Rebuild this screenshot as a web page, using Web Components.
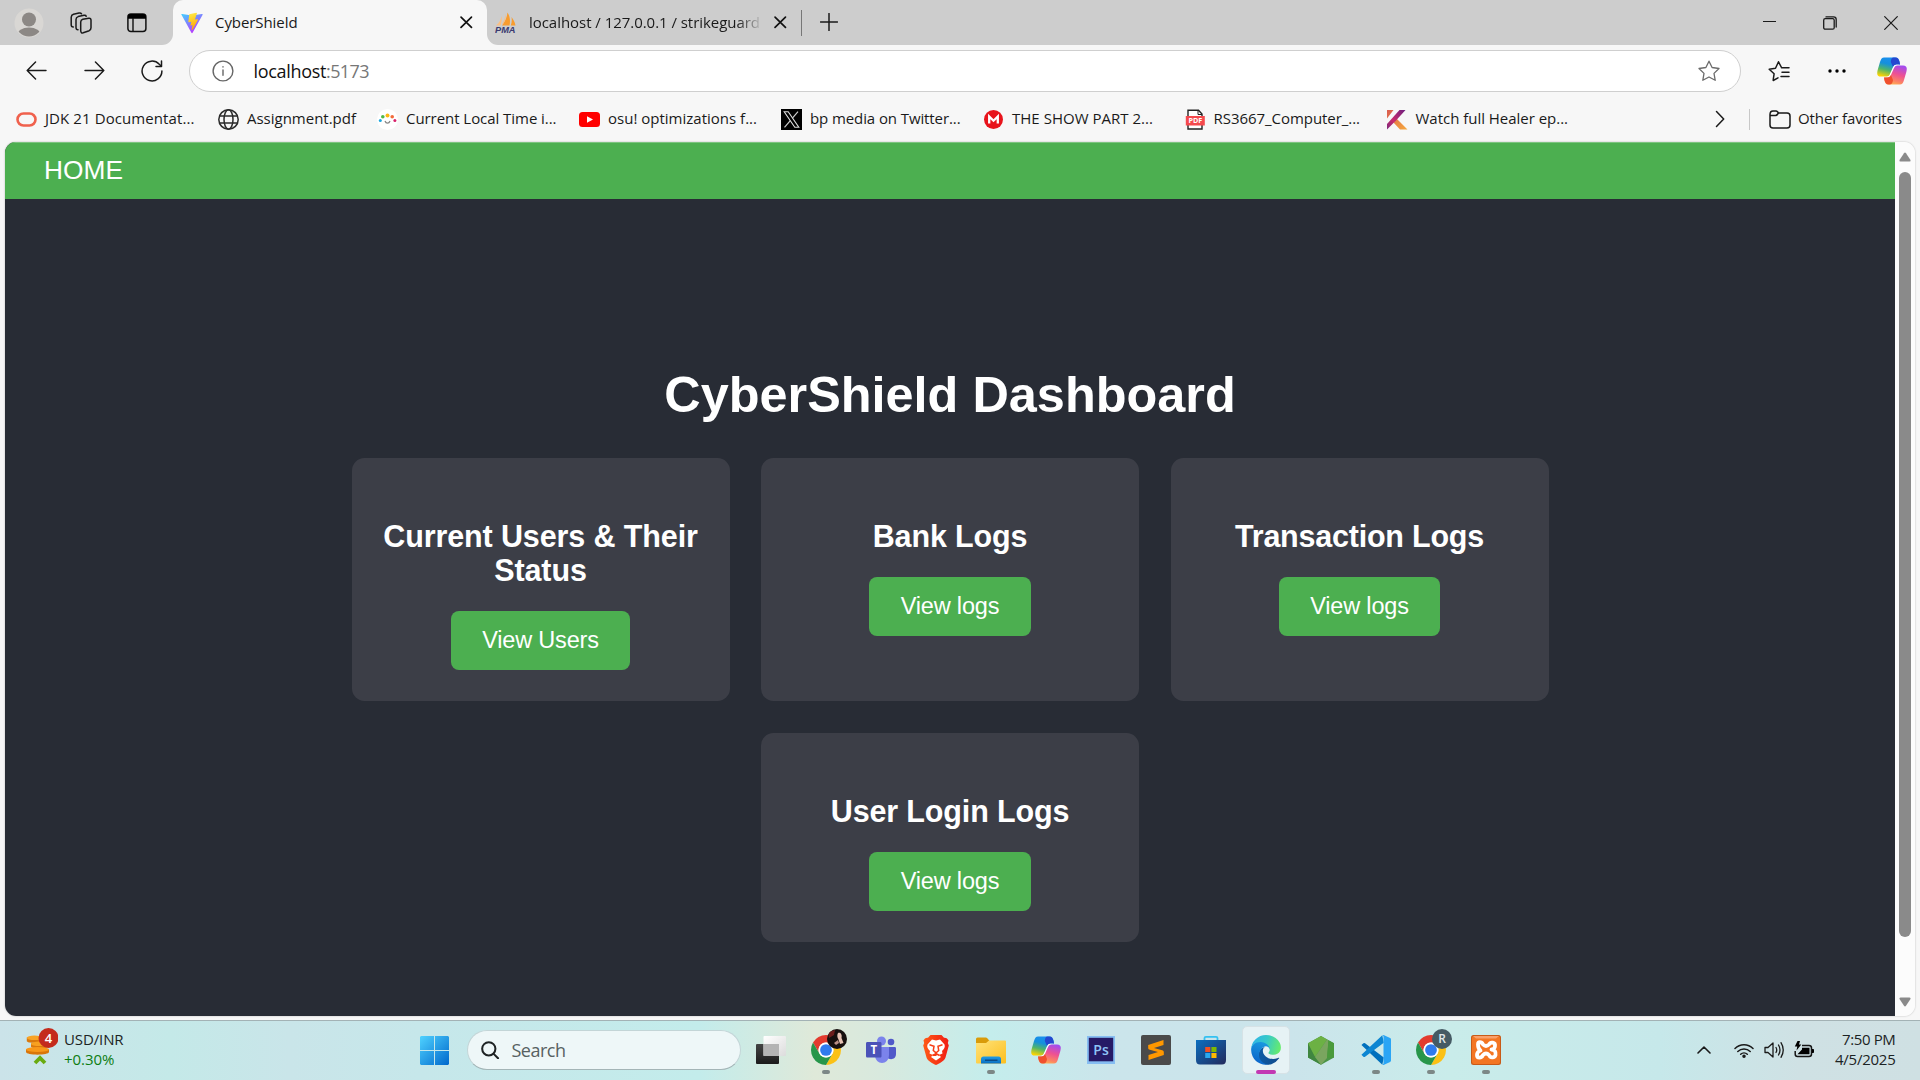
<!DOCTYPE html>
<html lang="en">
<head>
<meta charset="utf-8">
<title>CyberShield</title>
<style>
html,body{margin:0;padding:0;width:1920px;height:1080px;overflow:hidden;background:#f7f7f7;font-family:"Open Sans","Noto Sans",sans-serif}
</style>
</head>
<body>
<desktop-screen></desktop-screen>
<script>
const copilot = `<svg viewBox="0 0 30 28"><defs>
<linearGradient id="a" x1=".6" y1="0" x2=".3" y2="1"><stop offset="0" stop-color="#1a8ff0"/><stop offset=".35" stop-color="#1590dc"/><stop offset=".65" stop-color="#4fb56a"/><stop offset="1" stop-color="#fdd400"/></linearGradient>
<linearGradient id="b" x1=".7" y1="0" x2=".35" y2="1"><stop offset="0" stop-color="#a24bf0"/><stop offset=".45" stop-color="#ee5192"/><stop offset=".8" stop-color="#fc8463"/><stop offset="1" stop-color="#ffb152"/></linearGradient></defs>
<path fill="url(#a)" d="M7 .5H18C21 .5 22 2.500 22.600 5L23 7.500H19.500C17.500 7.500 16.300 9 15.400 11.500L13.200 16.500C12.300 18.800 11.500 19.600 9.500 19.600H4C.2 19.600-.3 17.200.6 13.300L3 5C4 1.800 5 .5 7 .5Z"/>
<path fill="#2448d0" d="M16.500.5H18.500C21 .5 22 2.500 22.600 5L23 7.500H19.500C18 7.500 16.800 8.300 16 10L13.800 5C14 2 14.800.5 16.500.5Z"/>
<path fill="#fff" d="M19.500 7.700H22.500C19.500 8 18 9.500 17 12L15 17C14 19.500 12.500 20.300 10.500 20.300H7.500C11 20 12.500 19 13.400 16.700L15.600 11.700C16.500 9.300 17.600 7.700 19.500 7.700Z"/>
<path fill="url(#b)" d="M23 27.500H12C9 27.500 8 25.500 7.400 23L7 20.500H10.500C12.500 20.500 13.700 19 14.600 16.500L16.800 11.500C17.700 9.200 18.500 8.400 20.500 8.400H26C29.800 8.400 30.300 10.800 29.400 14.700L27 23C26.200 26.200 25 27.500 23 27.500Z"/>
<path fill="#f0502e" d="M12.500 27.500H11.500C9 27.500 8 25.500 7.400 23L7 20.500H10.500C12 20.500 13.200 19.700 14 18L16 23C15.700 26 14.500 27.500 12.500 27.500Z"/></svg>`;
const chromeBase = `<path fill="#e33b2e" d="M24 13H43.050A22 22 0 0 0 4.950 13L14.470 29.500A11 11 0 0 1 24 13Z"/><path fill="#fbc116" d="M43.050 13A22 22 0 0 1 24 46L33.530 29.500A11 11 0 0 0 24 13Z"/><path fill="#27964a" d="M4.950 13A22 22 0 0 0 24 46L33.530 29.500A11 11 0 0 1 14.470 29.500Z"/><circle cx="24" cy="24" r="11" fill="#fff"/><circle cx="24" cy="24" r="8.600" fill="#2f7bee"/>`;
const line = (vb, body, w = 1.5, c = '#1a1a1a') => `<svg viewBox="${vb}" fill="none" stroke="${c}" stroke-width="${w}" stroke-linecap="round" stroke-linejoin="round">${body}</svg>`;
const ICONS = {
 avatar: `<svg viewBox="0 0 30 30"><defs><clipPath id="c"><circle cx="15" cy="15" r="13.500"/></clipPath></defs><circle cx="15" cy="15" r="14.500" fill="#d9d7d4"/><g clip-path="url(#c)" fill="#8c8885"><circle cx="15" cy="11.500" r="7"/><ellipse cx="15" cy="27.500" rx="12" ry="8"/></g></svg>`,
 workspaces: line('0 0 22 22', '<path d="M12.800 7.300 18.800 6.300Q21 6 21 8.200V15.800Q21 17.800 19.200 18.700L13.200 20.800Q10.800 21.300 10.700 18.800V10Q10.800 7.800 12.800 7.300Z"/><path d="M8 17.800Q6 17.800 6 15.500V7.500Q6.100 5.300 8.200 4.600L14 3.300Q15.800 3 16.200 4.200"/><path d="M3.300 15Q1.200 15 1.200 12.700V5.200Q1.300 3 3.500 2.300L9 1.100Q10.800.7 11.500 1.800"/>', 1.5),
 tabs: `<svg viewBox="0 0 20 20"><rect x=".9" y="1" width="18" height="17.500" rx="3" fill="none" stroke="#111" stroke-width="1.500"/><path d="M1 5.800V4A3 3 0 0 1 4 1H16A3 3 0 0 1 19 4V5.800Z" fill="#000"/><path d="M6 5V18" stroke="#111" stroke-width="1.400"/></svg>`,
 vite: `<svg viewBox="0 0 22 22"><defs><linearGradient id="a" x1="0" y1="0" x2=".6" y2="1"><stop offset="0" stop-color="#41d1ff"/><stop offset="1" stop-color="#bd34fe"/></linearGradient><linearGradient id="b" x1=".4" y1="0" x2=".6" y2="1"><stop offset="0" stop-color="#ffea45"/><stop offset="1" stop-color="#ffa000"/></linearGradient></defs><path fill="url(#a)" d="M.5 2.800C0 2 .5 1.800 1.200 1.900L11 3.600 20.800 1.900C21.600 1.800 21.900 2.200 21.500 2.900L11.600 20.800C11.300 21.400 10.700 21.400 10.400 20.800Z"/><path fill="url(#b)" d="M15.300.8 8.300 2.200 7.300 9.800C7.300 10.200 7.600 10.300 8 10.200L10.300 9.700 9.500 12.900C9.400 13.300 9.700 13.500 10.100 13.400L11.500 13 10.700 17.500C10.700 18.100 11.200 18.200 11.500 17.700L17 7.800C17.200 7.400 16.900 7.100 16.500 7.200L13.900 7.600 15.900 1.400C16 1 15.700.7 15.300.8Z"/></svg>`,
 x: line('0 0 12 12', '<path d="M1 1 11 11M11 1 1 11"/>', 1.6, '#111'),
 pma: `<svg viewBox="0 0 21 21"><path fill="#f89c2e" d="M12.500.5C15 4 15.500 9 14.500 13.500H7C10 9.500 12 5.500 12.500.5ZM16.500 5C18 7 20 10 20.500 13.500H15.800C16.800 10.500 17 8 16.500 5Z"/><path fill="#fbc083" d="M6.500 4C7.300 7 6.500 10.500 5.500 13.500H1C4 11 6 8 6.500 4ZM11 2C11 7 9.500 10.500 6.500 13.500 8.500 9 9.500 7 11 2Z"/><text x="0" y="20.500" font-family="Liberation Sans" font-weight="bold" font-style="italic" font-size="8.300" textLength="20.500" lengthAdjust="spacingAndGlyphs" fill="#3a3a70">PMA</text></svg>`,
 plus: line('0 0 18 18', '<path d="M9 .5V17.500M.5 9H17.500"/>', 1.5),
 min: line('0 0 13 3', '<path d="M0 1.500H13"/>', 1.2),
 restore: line('0 0 14 14', '<rect x=".7" y="2.700" width="10.500" height="10.500" rx="1.500"/><path d="M3 .9H10.500C12.300.9 13.200 1.800 13.200 3.500V11"/>', 1.3),
 close: line('0 0 14 14', '<path d="M.7.7 13.300 13.300M13.300.7.7 13.300"/>', 1.2),
 back: line('0 0 22 20', '<path d="M21 10H1.200M10 1 1.200 10 10 19"/>', 1.5),
 fwd: line('0 0 22 20', '<path d="M1 10H20.800M12 1 20.800 10 12 19"/>', 1.5),
 reload: line('0 0 22 22', '<path d="M20.900 11A9.900 9.900 0 1 1 18.300 4.300L20 6"/><path d="M20.500 1V6.500H15"/>', 1.5),
 info: line('0 0 22 22', '<circle cx="11" cy="11" r="9.900"/><path d="M11 10V15.200M11 6.700V7.100"/>', 1.4, '#666'),
 star: line('0 0 22 22', '<path d="M11 1.200 14.100 7.500 21 8.500 16 13.400 17.200 20.300 11 17 4.800 20.300 6 13.400 1 8.500 7.900 7.500Z"/>', 1.3, '#6b6b6b'),
 favs: line('0 0 22 22', '<path d="M10 17.800 5.200 20.500C5 20 6 15 6.100 13.800L1.200 9.200 7.500 8.200 10.500 1.800 13.500 7.500M13.500 7.700H21M14 12.200H21M13 16.500H21"/>', 1.5),
 dots: `<svg viewBox="0 0 18 6"><circle cx="2" cy="3" r="1.700"/><circle cx="9" cy="3" r="1.700"/><circle cx="16" cy="3" r="1.700"/></svg>`,
 copilot,
 oracle: `<svg viewBox="0 0 21 21"><rect x="1.500" y="4.500" width="18" height="12" rx="6" fill="none" stroke="#f0614d" stroke-width="2.600"/></svg>`,
 globe: line('0 0 21 21', '<circle cx="10.500" cy="10.500" r="9.700"/><ellipse cx="10.500" cy="10.500" rx="4.500" ry="9.700"/><path d="M1.800 7H19.200M1.800 14H19.200"/>', 1.5, '#2b2b2b'),
 clock: `<svg viewBox="0 0 21 21"><circle cx="10.500" cy="10.500" r="10.500" fill="#fff"/><circle cx="3.300" cy="11.500" r="1.500" fill="#1da8e0"/><circle cx="5.800" cy="7.800" r="1.800" fill="#51b848"/><circle cx="10.500" cy="6.500" r="2" fill="#fdb813"/><circle cx="15.200" cy="7.800" r="1.800" fill="#f26b3a"/><circle cx="17.900" cy="11.500" r="1.500" fill="#d8216b"/><path d="M8 12C9 14.800 12 14.800 13 12" stroke="#888" fill="none" stroke-width="1.300"/></svg>`,
 youtube: `<svg viewBox="0 0 21 21"><rect y="3" width="21" height="15" rx="3.500" fill="#f00"/><path fill="#fff" d="M8 7.300V13.700L14 10.500Z"/></svg>`,
 xlogo: `<svg viewBox="0 0 21 21"><rect width="21" height="21"/><path d="M3.200 2.700H7.200L17.800 18.300H13.800Z" fill="none" stroke="#ddd" stroke-width="1.100"/><path d="M17 2.700 11.400 9.200M9.300 11.700 3.500 18.300" stroke="#ccc" stroke-width="1.200"/></svg>`,
 mega: `<svg viewBox="0 0 21 21"><circle cx="10.500" cy="10.500" r="9.500" fill="#e8141c"/><path fill="none" stroke="#fff" stroke-width="2.300" stroke-linejoin="miter" d="M6.200 14.500V7.500L10.500 11.700 14.800 7.500V14.500"/></svg>`,
 pdf: `<svg viewBox="0 0 21 21"><path d="M3 1.200H13.500L17 5V20H3Z" fill="#fff" stroke="#222" stroke-width="1.400"/><path d="M13 1.500V5.500H17" fill="none" stroke="#222"/><rect x=".8" y="7" width="19" height="9.500" fill="#f5494d"/><text x="10.300" y="14.300" text-anchor="middle" font-family="Open Sans" font-weight="bold" font-size="7.200" fill="#fff">PDF</text></svg>`,
 kiss: `<svg viewBox="0 0 21 21"><defs><linearGradient id="a" x1="1" y1="0" x2="0" y2="1"><stop offset="0" stop-color="#6d2080"/><stop offset=".6" stop-color="#c92a6c"/><stop offset="1" stop-color="#7b2a7e"/></linearGradient><linearGradient id="b" x1="0" y1="0" x2="1" y2="1"><stop offset="0" stop-color="#d95c50"/><stop offset="1" stop-color="#f6a93d"/></linearGradient></defs><path fill="url(#b)" d="M0 1H6.500L0 9.500ZM9.500 9.500 20.500 20.500H13L6.500 13.500Z"/><path fill="url(#a)" d="M12.500 1H18.500L9 11.500 0 20.500V15Z"/></svg>`,
 chev: line('0 0 10 18', '<path d="M1.500 1.500 8.700 9 1.500 16.500"/>', 1.5),
 folder: line('0 0 22 19', '<path d="M1 4.500V15C1 17 2 18 4 18H18C20 18 21 17 21 15V6C21 4 20 3 18 3H9.500L8.500 1.700C8 1.200 7.500 1 7 1H4C2 1 1 2.200 1 4.500ZM1.200 5.500H6.500C7.500 5.500 8.200 5.200 9.500 3"/>', 1.5),
 up: `<svg viewBox="0 0 12 10"><path fill="#8a8a8a" d="M.5 8 5 1.200Q6 0 7 1.200L11.500 8Q12 9.500 10.500 9.500H1.500Q0 9.500.5 8Z"/></svg>`,
 down: `<svg viewBox="0 0 12 10"><path fill="#8a8a8a" d="M.5 2 5 8.800Q6 10 7 8.800L11.500 2Q12 .5 10.500.5H1.500Q0 .5.5 2Z"/></svg>`,
 coins: `<svg viewBox="0 0 32 40"><path fill="#d9780c" d="M.8 9.500V13C.8 15.500 16 15.500 16 13V9.500Z"/><ellipse cx="8.400" cy="9.800" rx="7.600" ry="2.300" fill="#f8a325"/><path fill="#da780c" d="M5 15.500V18.500C5 21.300 22.500 21.300 22.500 18.500V15.500Z"/><ellipse cx="13.700" cy="15.800" rx="8.800" ry="2.300" fill="#f7a020"/><path fill="#d9750a" d="M0 21.300V24C0 27.500 23 27.500 23 24V21.300Z"/><ellipse cx="11.500" cy="21.500" rx="11.500" ry="2.600" fill="#f8981a"/><path fill="none" stroke="#69ab10" stroke-width="3.800" d="M9 35 14 30 19 35"/><circle cx="22.500" cy="10" r="10" fill="#c42b1c"/><text x="22.500" y="14.800" font-family="Open Sans" font-weight="600" font-size="13" fill="#fff" text-anchor="middle">4</text></svg>`,
 win: `<svg viewBox="0 0 29 29"><defs><linearGradient id="a" gradientUnits="userSpaceOnUse" x1="0" y1="0" x2="29" y2="29"><stop offset="0" stop-color="#4fd2ff"/><stop offset="1" stop-color="#0068cc"/></linearGradient></defs><path fill="url(#a)" d="M1 0H14V14H0V1ZM15 0H28L29 1V14H15ZM0 15H14V29H1L0 28ZM15 15H29V28L28 29H15Z"/></svg>`,
 search: line('0 0 19 19', '<circle cx="8" cy="8" r="6.800"/><path d="M13 13.200 17.500 17.700"/>', 2.1, '#1e2324'),
 taskview: `<svg viewBox="0 0 30 30"><defs><linearGradient id="a" x2="1" y2="1"><stop stop-color="#fff"/><stop offset="1" stop-color="#dcdcdc"/></linearGradient><linearGradient id="b" x2="0" y2="1"><stop stop-color="#444"/><stop offset="1" stop-color="#1b1b1b"/></linearGradient></defs><rect y="9" width="23" height="20" rx="1" fill="url(#b)"/><rect x="7.500" y="1" width="22.500" height="20" rx="1" fill="url(#a)"/><rect x="7.500" y="9" width="15.500" height="12" fill="#b4b4b4"/></svg>`,
 chrome: `<svg viewBox="2 2 44 44" overflow="visible">${chromeBase}</svg>`,
 face: `<svg viewBox="0 0 20 20"><defs><clipPath id="c"><circle cx="10" cy="10" r="10"/></clipPath></defs><g clip-path="url(#c)"><rect width="20" height="20" fill="#17100f"/><path fill="#6b1d1c" d="M1 3 8 1 7 6 2 9Z"/><path fill="#e6c2b4" d="M11 4C13 3 15.500 5 14.500 9L16.500 14 13 15 11.500 10.500C10 8 10 6 11 4Z"/><path fill="#b98f86" d="M7 14 11 11 12 14 9 16Z"/></g></svg>`,
 rbadge: `<svg viewBox="0 0 20 20"><circle cx="10" cy="10" r="10" fill="#455a64"/><text x="10" y="14.300" text-anchor="middle" font-family="Open Sans" font-weight="600" font-size="12" fill="#dfe6e9">R</text></svg>`,
 teams: `<svg viewBox="0 0 30 28"><circle cx="15.500" cy="5" r="4.500" fill="#7b83eb"/><circle cx="25" cy="6" r="3.300" fill="#5059c9"/><path fill="#5059c9" d="M21 11H28.500C29.500 11 30 11.500 30 12.500V18C30 24 23 24.500 21 21Z"/><path fill="#7b83eb" d="M9 11H23V19C23 29.500 9 29.500 9 19Z"/><path fill="#4b52b8" d="M1.500 6H14C15 6 15.500 6.500 15.500 7.500V20C15.500 21 15 21.500 14 21.500H1.500C.5 21.500 0 21 0 20V7.500C0 6.500.5 6 1.500 6Z"/><text x="7.800" y="17.800" font-family="Open Sans" font-weight="bold" font-size="11.500" text-anchor="middle" fill="#fff">T</text></svg>`,
 brave: `<svg viewBox="0 0 26 30"><defs><linearGradient id="a" x2="1"><stop stop-color="#ff5a16"/><stop offset="1" stop-color="#f01c14"/></linearGradient></defs><path fill="url(#a)" d="M7.500 0H18.500L21 2.800C23.500 2.500 24.500 4 25.500 5.500L24.800 8 25.800 10.500 22.500 22.500C21.500 26 16 28.500 13 30 10 28.500 4.500 26 3.500 22.500L.2 10.500 1.200 8 .5 5.500C1.500 4 2.500 2.500 5 2.800Z"/><path fill="#fff" d="M9 4.500 13 5.500 17 4.500 21.500 9.500C22.500 12 21 14 19 16L19.500 18.500 16 20 18 22 13 25.500 8 22 10 20 6.500 18.500 7 16C5 14 3.500 12 4.500 9.500Z"/><path fill="none" stroke="#f73c15" stroke-width="1.500" d="M6.500 9.800 11 11.200 10.300 15.500 12.800 17.700V21M19.500 9.800 15 11.200 15.700 15.500 13.200 17.700M9.500 20.500 13 18.500 16.500 20.500"/></svg>`,
 explorer: `<svg viewBox="0 0 30 27"><defs><linearGradient id="a" x2="1" y2="1"><stop stop-color="#ffe27a"/><stop offset="1" stop-color="#fcbf1e"/></linearGradient><linearGradient id="b" x2="0" y2="1"><stop stop-color="#1f9be6"/><stop offset="1" stop-color="#0a6fc0"/></linearGradient></defs><path fill="#d99b0a" d="M0 2Q0 .5 1.500.5H10Q11 .5 12 2L13.500 4H20V8H0Z"/><path fill="url(#a)" d="M0 6H10L13 3.500H29Q30 3.500 30 4.500V25.500Q30 26.500 29 26.500H1Q0 26.500 0 25.500Z"/><path fill="url(#b)" d="M5 26.500V22Q5 19.500 7.500 19.500H22.500Q25 19.500 25 22V26.500Z"/><path d="M9 23.200H21.500" stroke="#0a3f75" stroke-width="1.200"/></svg>`,
 ps: `<svg viewBox="0 0 28 28"><rect width="28" height="28" fill="#86bdf2"/><rect x="1.800" y="1.800" width="24.400" height="23.500" fill="#261a66"/><text x="14" y="18.500" text-anchor="middle" font-family="Open Sans" font-weight="600" font-size="13.500" textLength="15.500" lengthAdjust="spacingAndGlyphs" fill="#8fc4f7">Ps</text></svg>`,
 sublime: `<svg viewBox="0 0 30 30"><rect width="30" height="30" rx="2" fill="#4a4a4a"/><path fill="#ff9800" d="M22.500 5V10L13 13 22 15.500Q22.800 16 22.800 17V20L7.500 25V20L17 17 8 14.500Q7.200 14 7.200 13V10Z"/></svg>`,
 store: `<svg viewBox="0 0 30 30"><defs><linearGradient id="a" x2="1" y2="1"><stop stop-color="#0b6fc0"/><stop offset="1" stop-color="#232a5c"/></linearGradient></defs><path fill="none" stroke="#35c1f1" stroke-width="1.800" d="M8.500 6.500V3Q8.500 1.800 10 1.800H20Q21.500 1.800 21.500 3V6.500"/><path fill="url(#a)" d="M0 5H30V25Q30 29.500 26 29.500H4Q0 29.500 0 25Z"/><path fill="#f25022" d="M9.200 12H14.300V17H9.200Z"/><path fill="#7fba00" d="M15.400 12H20.500V17H15.400Z"/><path fill="#2aa8ee" d="M9.200 18H14.300V23H9.200Z"/><path fill="#ffb900" d="M15.400 18H20.500V23H15.400Z"/></svg>`,
 edge: `<svg viewBox="0 0 256 258"><defs><linearGradient id="a" x1="0" x2="1"><stop stop-color="#0c5aa6"/><stop offset="1" stop-color="#114a8b"/></linearGradient><linearGradient id="b" x1=".7" y1="0" x2=".4" y2="1"><stop stop-color="#1b9de2"/><stop offset="1" stop-color="#0b63c9"/></linearGradient><linearGradient id="c" x1="0" y1=".3" x2="1" y2=".5"><stop stop-color="#2fb3e8"/><stop offset=".5" stop-color="#36c9c9"/><stop offset="1" stop-color="#66eb6e"/></linearGradient></defs><path fill="url(#a)" d="M235.680 195.460a93.730 93.730 0 0 1-10.540 4.710 101.870 101.870 0 0 1-35.900 6.460c-47.320 0-88.540-32.550-88.540-74.320A31.480 31.480 0 0 1 117.130 104.760c-42.800 1.800-53.800 46.400-53.800 72.530 0 73.880 68.090 79 82.760 79 7.910 0 19.840-2.300 27-4.560l1.310-.44a128.340 128.340 0 0 0 66.600-50.400 4 4 0 0 0-5.320-5.400z"/><path fill="url(#b)" d="M105.730 241.420a79.200 79.200 0 0 1-22.740-21.340 80.720 80.720 0 0 1 29.530-120c3.120-1.470 8.450-4.130 15.540-4a32.350 32.350 0 0 1 25.690 13 31.880 31.880 0 0 1 6.360 18.660c0-.21 24.460-79.600-80-79.600-43.900 0-80 41.660-80 78.210a130.150 130.150 0 0 0 12.110 56 128 128 0 0 0 156.380 67.110 75.550 75.550 0 0 1-62.780-8z"/><path fill="url(#c)" d="M152.330 148.860c-.81 1.050-3.300 2.500-3.300 5.660 0 2.610 1.700 5.120 4.720 7.230 14.380 10 41.490 8.680 41.560 8.680a59.560 59.560 0 0 0 30.270-8.350A61.380 61.380 0 0 0 256 109.060c.26-22.410-8-37.310-11.340-43.910C223.460 23.690 177.720 0 128 0A128 128 0 0 0 0 126.200c.48-36.540 36.800-66.050 80-66.050 3.500 0 23.460.34 42 10.070 16.340 8.580 24.900 18.940 30.850 29.210 6.180 10.670 7.280 24.150 7.280 29.520s-2.740 13.330-7.800 19.910z"/></svg>`,
 node: `<svg viewBox="0 0 26 29"><path fill="#4b9446" d="M13 0 26 7.300V21.500L13 28.800 0 21.500V7.300Z"/><path fill="#6cb144" d="M0 7.300 13 0 19 3.500 7 21 3 15Z"/><path fill="#3f8640" d="M0 7.300 7 21 13 28.800 0 21.500Z"/><path fill="#7aa55f" d="M19 3.500 20.500 4.300 19 22 13 28.800 7 21Z"/><path fill="#4a9a3c" d="M20.500 4.300 26 7.300V21.500L19 22Z"/></svg>`,
 vscode: `<svg viewBox="0 0 100 100"><path fill="#0070bd" d="M1.500 33 8 27.500Q11 25.500 13.500 27.500L76 75 71 99.500Z"/><path fill="#0d86d2" d="M1.500 66 8 72.500Q11 74.500 13.500 72.500L76 26 71 .5Z"/><path fill="#2aa5f5" d="M71 .5Q74-.5 77 .8L97 10.300Q100 12 100 15V85Q100 88 97 89.700L77 99.200Q74 100.500 71 99.500Q75 98.500 75 95V5Q75 1.500 71 .5Z"/></svg>`,
 xampp: `<svg viewBox="0 0 30 30"><rect width="30" height="30" rx="2.500" fill="#c85a18"/><rect x="1" y="1" width="28" height="28" rx="2" fill="#f37623"/><path fill="#f9a06a" d="M2 1H28L25 3.500H5Z"/><path fill="none" stroke="#fff" stroke-width="3.800" stroke-linecap="round" stroke-linejoin="round" d="M7 9.500C7 6.500 10.500 6.500 12 9.500 14 11.500 16 11.500 18 9.500 19.500 6.500 24.500 7 24 11 24 13.500 22 14.500 20.500 14.500 24 15 25 17 24.500 20 23.500 23.500 19 23 18 20 16 18 14 18 12 20 10.500 23.500 6 23.500 6 20 6 17.500 8 16 9.500 15.500 7.500 14 7 12 7 9.500Z"/></svg>`,
 caret: line('0 0 14 8', '<path d="M1 7 7 1 13 7"/>', 1.6),
 wifi: line('0 0 20 15', '<path d="M1 5.500A12.500 12.500 0 0 1 19 5.500M3.800 8.500A8.800 8.800 0 0 1 16.200 8.500M6.700 11.200A4.800 4.800 0 0 1 13.300 11.200"/><circle cx="10" cy="13.200" r="1" fill="#1a1a1a"/>', 1.5),
 sound: line('0 0 20 18', '<path d="M1 6.500H4L9 2V16L4 11.500H1Z"/><path d="M12 6.500Q13.500 9 12 11.500M14.500 4Q17.500 9 14.500 14M17 1.700Q21.500 9 17 16.300"/>', 1.3),
 battery: `<svg viewBox="0 0 20 18"><path fill="none" stroke="#151515" stroke-width="1.500" d="M8 4.500H15Q17.500 4.500 17.500 7V13Q17.500 15.500 15 15.500H3.500Q1.200 15.500 1.200 13V10"/><path d="M8 6.700H15.500V13.300H3.500L8 8.500Z"/><path d="M18 8H19.200Q20 8 20 9V11Q20 12 19.200 12H18Z"/><path d="M3.500 0H6L5 3.500H7.300L2.500 9.500 3.300 5.500H.8Z"/></svg>`
};
const define = (tag, html) => customElements.define(tag, class extends HTMLElement {
  connectedCallback(){ if(!this.shadowRoot) this.attachShadow({mode:'open'}).innerHTML = html; }
});

customElements.define('ui-icon', class extends HTMLElement {
  connectedCallback(){
    const w = this.getAttribute('w'), h = this.getAttribute('h') || w;
    this.attachShadow({mode:'open'}).innerHTML = `<style>:host{display:block;flex:none;width:${w}px;height:${h}px}svg{display:block;width:100%;height:100%}</style>${ICONS[this.getAttribute('name')]}`;
  }
});

/* Text that tracks itself to a given advance width. */
customElements.define('fit-text', class extends HTMLElement {
  connectedCallback(){
    this.attachShadow({mode:'open'}).innerHTML = '<style>:host{display:inline-block;white-space:nowrap;flex:none}span{display:inline-block}</style><span><slot></slot></span>';
    const s = this.shadowRoot.querySelector('span'), w = +this.getAttribute('w');
    const n = this.textContent.length;
    s.style.letterSpacing = ((w - s.getBoundingClientRect().width) / n) + 'px';
  }
});

define('tab-strip', `<style>
:host{display:flex;height:45px;background:#f7f7f7;font-size:15px;color:#1a1a1a}
.l,.r{background:#cdcdcd;display:flex;align-items:center;box-sizing:border-box}
.l{width:173px;border-radius:0 0 11px 0;padding-left:14px;gap:26px}
.mid{background:linear-gradient(#cdcdcd 50%,#f7f7f7 50%);width:314px}
.tab{height:45px;box-sizing:border-box;background:#f7f7f7;border-radius:10px 10px 0 0;display:flex;align-items:center;padding:0 14.500px 0 8px}
.tab fit-text{margin-left:12px;margin-right:auto}
fit-text{padding-bottom:2px}
.r{flex:1;border-radius:0 0 0 11px;padding:0 22.500px 0 8px}
.fade{margin-left:13px;width:231px;-webkit-mask:linear-gradient(90deg,#000 208px,transparent 234px);overflow:hidden}
.d{width:1px;height:26px;background:#777;margin:0 18.500px 0 14px}
.sp{flex:1}.wc{display:flex;align-items:center;gap:47px}
</style><div class="l"><ui-icon name="avatar" w="30"></ui-icon><ui-icon name="workspaces" w="22"></ui-icon><ui-icon name="tabs" w="20" style="margin-left:8.500px"></ui-icon></div>
<div class="mid"><div class="tab"><ui-icon name="vite" w="22"></ui-icon><fit-text w="82.5">CyberShield</fit-text><ui-icon name="x" w="12.500"></ui-icon></div></div>
<div class="r"><ui-icon name="pma" w="21"></ui-icon><div class="fade"><fit-text w="231">localhost / 127.0.0.1 / strikeguard</fit-text></div><ui-icon name="x" w="12.500" style="margin-left:14px"></ui-icon><div class="d"></div><ui-icon name="plus" w="18" style="margin-bottom:1px"></ui-icon><div class="sp"></div><div class="wc"><ui-icon name="min" w="13" h="3" style="margin-bottom:2px"></ui-icon><ui-icon name="restore" w="14"></ui-icon><ui-icon name="close" w="14"></ui-icon></div></div>`);

define('address-row', `<style>
:host{display:flex;height:53px;padding:0 13px 2px 26px;box-sizing:border-box;align-items:center}
.pill{width:1552px;height:42px;margin:1px 0 0 26px;box-sizing:border-box;border:1px solid #cfcfcf;border-radius:21px;background:#fff;display:flex;align-items:center;padding:0 20px 0 22px;font-size:18px;color:#111}
.pill .p{color:#777}.pill .h{margin-left:19.500px}.sp{flex:1}
.pill fit-text{padding-bottom:1px}
</style><ui-icon name="back" w="21" h="19"></ui-icon><ui-icon name="fwd" w="21" h="19" style="margin-left:37px"></ui-icon><ui-icon name="reload" w="22" style="margin-left:36px"></ui-icon>
<div class="pill"><ui-icon name="info" w="22"></ui-icon><fit-text class="h" w="72.5">localhost</fit-text><fit-text class="p" w="43">:5173</fit-text><div class="sp"></div><ui-icon name="star" w="22"></ui-icon></div>
<ui-icon name="favs" w="22" style="margin-left:26.500px"></ui-icon><ui-icon name="dots" w="18" h="6" style="margin-left:38px"></ui-icon><div class="sp"></div><ui-icon name="copilot" w="30" h="28" style="margin-top:1px"></ui-icon>`);

define('book-mark', `<style>:host{display:flex;align-items:center;flex:none;gap:8px}::slotted(fit-text){padding-bottom:2px}</style><slot></slot>`);
const marks = [['oracle','JDK 21 Documentat...',149.5,202],['globe','Assignment.pdf',109,159],['clock','Current Local Time i...',150.5,202],['youtube','osu! optimizations f...',149,202],['xlogo','bp media on Twitter...',150.5,202],['mega','THE SHOW PART 2...',141,201.5],['pdf','RS3667_Computer_...',146.5,202],['kiss','Watch full Healer ep...',152.500,202]];
define('bookmark-bar', `<style>
:host{display:flex;height:44px;box-sizing:border-box;padding:0 18px 2px 16px;align-items:center;font-size:15px;color:#1a1a1a}
.sp{flex:1}.d{width:1px;height:21px;background:#c8c8c8;margin:0 19px 0 24px}
</style>${marks.map(m=>`<book-mark style="width:${m[3]}px"><ui-icon name="${m[0]}" w="21"></ui-icon><fit-text w="${m[2]}">${m[1]}</fit-text></book-mark>`).join('')}<div class="sp"></div><ui-icon name="chev" w="10" h="18"></ui-icon><div class="d"></div><book-mark style="gap:7.500px"><ui-icon name="folder" w="22" h="19"></ui-icon><fit-text w="104">Other favorites</fit-text></book-mark>`);

define('log-card', `<style>
:host{display:block;box-sizing:border-box;width:378px;padding:61px 25px 31px;background:#3c3e47;border-radius:12.500px;text-align:center;color:#fff}
h2{margin:0 0 24px;font-size:30.500px;line-height:34px;font-weight:bold}
button{display:inline-flex;align-items:center;justify-content:center;vertical-align:top;height:59px;padding:0 31.500px 2px;border:0;border-radius:8px;background:#4caf50;color:#fff;font:23.500px/28px "Liberation Sans",Arial,sans-serif}
</style><h2><slot></slot></h2><button><slot name="action"></slot></button>`);

define('dashboard-page', `<style>
:host{display:block;width:1890px;height:874px;background:#282c35;color:#fff;font-family:"Liberation Sans",Arial,sans-serif}
nav{height:57px;background:#4caf50;box-sizing:border-box;border-top:1px solid #7cc47f;padding-left:39px;font-size:26.300px;line-height:54px}
main{display:flex;flex-direction:column;align-items:center;padding-top:167px}
h1{margin:0 0 34px;font-size:50.400px;line-height:58px;font-weight:bold}
.grid{display:grid;grid-template-columns:repeat(3,378px);gap:32px 31.500px}
.grid>:last-child{grid-column:2}
</style><nav><fit-text w="79">HOME</fit-text></nav><main><h1><fit-text w="571.500">CyberShield Dashboard</fit-text></h1><div class="grid">
<log-card><fit-text w="314.500">Current Users &amp; Their</fit-text><br><fit-text w="92.500">Status</fit-text><fit-text slot="action" w="116.500">View Users</fit-text></log-card>
<log-card><fit-text w="154.500">Bank Logs</fit-text><fit-text slot="action" w="98.500">View logs</fit-text></log-card>
<log-card><fit-text w="249">Transaction Logs</fit-text><fit-text slot="action" w="98.500">View logs</fit-text></log-card>
<log-card><fit-text w="238.500">User Login Logs</fit-text><fit-text slot="action" w="98.500">View logs</fit-text></log-card></div></main>`);

define('scroll-bar', `<style>:host{display:flex;flex-direction:column;align-items:center;box-sizing:border-box;width:20px;height:874px;background:#fcfcfc;padding:10px 0 9px}
.t{width:12px;height:765px;border-radius:6px;background:#8a8a8a;margin:10px 0 auto}</style><ui-icon name="up" w="12" h="10"></ui-icon><div class="t"></div><ui-icon name="down" w="12" h="10"></ui-icon>`);

define('task-icon', `<style>:host{display:grid;place-items:center;flex:none;width:55px;height:60px;position:relative}
:host([active])::before{content:"";grid-area:1/1;width:46px;height:46px;background:#e6f2f5;border:1px solid #d6e2e6;border-radius:5px}
::slotted(ui-icon){grid-area:1/1}
::slotted([slot=badge]){position:absolute;left:29px;top:9px}
:host([open])::after{content:"";position:absolute;left:23.500px;top:50px;width:8px;height:4px;border-radius:2px;background:#7c8786}
:host([active])::after{left:17.500px;width:20px;background:#c239b3}</style><slot></slot><slot name="badge"></slot>`);

define('task-bar', `<style>
:host{display:flex;height:60px;box-sizing:border-box;font-size:15px;color:#1c2324;
background:linear-gradient(90deg,#cbe3e9 0,#c4e9e8 170px,#c9e5e9 290px,#c6e7ea 420px,#c3eceb 700px,#dfe9d9 815px,#d8e9de 880px,#c4edec 990px,#cbe5eb 1110px,#cbe4eb 1290px,#c9ecea 1450px,#c6e8ea 1660px,#cfe1e4 1800px,#cfe0e3 1920px);box-shadow:inset 0 1px #a3b2b5}
.w{display:flex;width:420px;box-sizing:border-box;padding:8px 0 0 26px}
.lines{display:flex;flex-direction:column;padding-top:1px;line-height:20px}
.w .lines{margin-left:6px}
.g{color:#0d7d12}
.start{display:flex;align-items:center;width:46.500px}
.search{display:flex;align-items:center;align-self:center;box-sizing:border-box;width:274px;height:40px;margin-right:2.500px;padding-left:13.500px;border:1px solid #c3d5d7;border-bottom-color:#a4b5b7;border-radius:20px;background:#eef7f8;font-size:18px;color:#576162}
.search fit-text{margin-left:12px}
.tray{display:flex;align-items:center;margin-left:auto;padding-right:24.500px}
.tray .lines{align-items:flex-end;align-self:flex-start;padding-top:9px;width:62px;margin-left:20px}
</style><div class="w"><ui-icon name="coins" w="32" h="40"></ui-icon><div class="lines"><fit-text w="59.500">USD/INR</fit-text><fit-text class="g" w="50.500">+0.30%</fit-text></div></div>
<div class="start"><ui-icon name="win" w="29"></ui-icon></div>
<div class="search"><ui-icon name="search" w="18.500"></ui-icon><fit-text w="54">Search</fit-text></div>
<task-icon><ui-icon name="taskview" w="30"></ui-icon></task-icon>
<task-icon open><ui-icon name="chrome" w="30"></ui-icon><ui-icon slot="badge" name="face" w="20"></ui-icon></task-icon>
<task-icon><ui-icon name="teams" w="30" h="28"></ui-icon></task-icon>
<task-icon><ui-icon name="brave" w="26" h="30"></ui-icon></task-icon>
<task-icon open><ui-icon name="explorer" w="30" h="27"></ui-icon></task-icon>
<task-icon><ui-icon name="copilot" w="30" h="28"></ui-icon></task-icon>
<task-icon><ui-icon name="ps" w="28"></ui-icon></task-icon>
<task-icon><ui-icon name="sublime" w="30"></ui-icon></task-icon>
<task-icon><ui-icon name="store" w="30"></ui-icon></task-icon>
<task-icon active open><ui-icon name="edge" w="30"></ui-icon></task-icon>
<task-icon><ui-icon name="node" w="26" h="29"></ui-icon></task-icon>
<task-icon open><ui-icon name="vscode" w="30"></ui-icon></task-icon>
<task-icon open><ui-icon name="chrome" w="30"></ui-icon><ui-icon slot="badge" name="rbadge" w="20"></ui-icon></task-icon>
<task-icon open><ui-icon name="xampp" w="30"></ui-icon></task-icon>
<div class="tray"><ui-icon name="caret" w="14" h="8"></ui-icon><ui-icon name="wifi" w="20" h="15" style="margin-left:23px"></ui-icon><ui-icon name="sound" w="20" h="18" style="margin-left:10px"></ui-icon><ui-icon name="battery" w="20" h="18" style="margin-left:10px"></ui-icon><div class="lines"><fit-text w="53.500">7:50 PM</fit-text><fit-text w="60.500">4/5/2025</fit-text></div></div>`);

define('desktop-screen', `<style>
:host{display:flex;flex-direction:column;width:1920px;height:1080px;background:#f7f7f7}
.view{display:flex;width:1910px;height:874px;margin:0 5px 4px;border-radius:11px;overflow:hidden;box-shadow:0 0 2px #0004}
</style><tab-strip></tab-strip><address-row></address-row><bookmark-bar></bookmark-bar><div class="view"><dashboard-page></dashboard-page><scroll-bar></scroll-bar></div><task-bar></task-bar>`);
</script>
</body>
</html>
